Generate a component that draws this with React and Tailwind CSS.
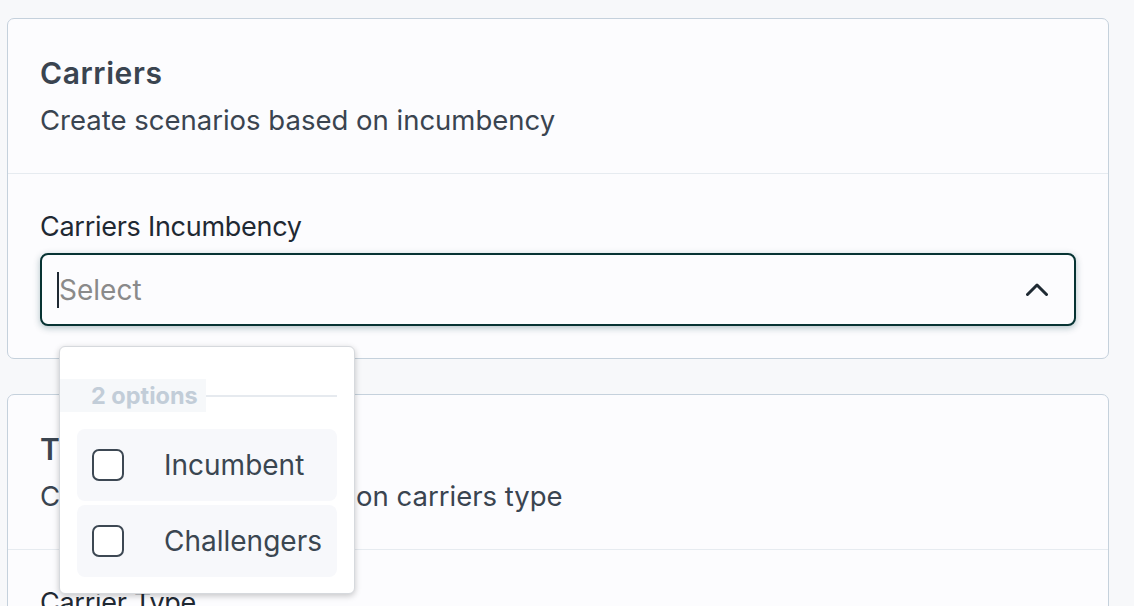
import React from 'react';

const font = { fontFamily: 'Inter, "Noto Sans", sans-serif' };

const Card = ({ title, subtitle, label, children }) => (
  <div className="rounded-[7px] border-[1.5px] border-[#c5d1dc] bg-[#fcfcfe]">
    <div className="px-[32px] pt-[34px] pb-[35px] border-b border-[#e6ebf0]">
      <h2 className="text-[30px] leading-[40px] font-semibold tracking-[0.02em] text-[#3a4450]">{title}</h2>
      <p className="mt-[9px] text-[27.5px] leading-[36px] text-[#3a4450]">{subtitle}</p>
    </div>
    <div className="px-[32px] pt-[35px] pb-[32px]">
      <label className="block text-[27px] leading-[36px] tracking-[-0.01em] text-[#1f2933]">{label}</label>
      <div className="mt-[8px]">{children}</div>
    </div>
  </div>
);

const Option = ({ text }) => (
  <div className="flex items-center h-[72px] rounded-[8px] bg-[#f7f8fb] pl-[15px]">
    <span className="w-[32px] h-[32px] rounded-[7px] border-2 border-[#3d4853] bg-white" />
    <span className="ml-[40px] text-[28px] text-[#3a4651]">{text}</span>
  </div>
);

export default function App() {
  return (
    <div className="min-h-screen overflow-hidden bg-[#f7f8fa] pt-[18px] pl-[7px] pr-[25px]" style={font}>
      <Card title="Carriers" subtitle="Create scenarios based on incumbency" label="Carriers Incumbency">
        <div className="relative">
          <div className="flex items-center h-[73px] rounded-[8px] border-2 border-[#073333] bg-[#fcfcfe] shadow-[0_2px_7px_rgba(7,60,70,0.3)] pl-[15px] pr-[26px]">
            <span className="w-[2px] h-[36px] bg-[#1f2933]" />
            <span className="flex-1 text-[28px] text-[#8a8a8a]">Select</span>
            <svg width="22" height="13" viewBox="0 0 22 13" fill="none">
              <polyline points="1.5,11.5 11,2 20.5,11.5" stroke="#1f2a33" strokeWidth="3" strokeLinecap="round" strokeLinejoin="round" />
            </svg>
          </div>
          <div className="absolute z-10 left-[19px] top-[93px] w-[296px] h-[248px] rounded-[6px] border border-[#d6d9dd] bg-white shadow-[0_2px_6px_rgba(0,0,0,0.22)] pt-[32px] pr-[17px]">
            <div className="flex items-center">
              <span className="h-[33px] flex items-center bg-[#f6f8fa] pl-[31px] pr-[8px] text-[23.5px] font-bold text-[#c2cdd8]">2 options</span>
              <span className="flex-1 h-[2px] bg-[#e6eaef]" />
            </div>
            <div className="mt-[17px] ml-[17px] flex flex-col gap-[4px]">
              <Option text="Incumbent" />
              <Option text="Challengers" />
            </div>
          </div>
        </div>
      </Card>
      <div className="mt-[35px]">
        <Card title="Type" subtitle="Create scenarios based on carriers type" label="Carrier Type">
          <div className="h-[73px] rounded-[8px] border border-[#c5d1dc] bg-white" />
        </Card>
      </div>
    </div>
  );
}
